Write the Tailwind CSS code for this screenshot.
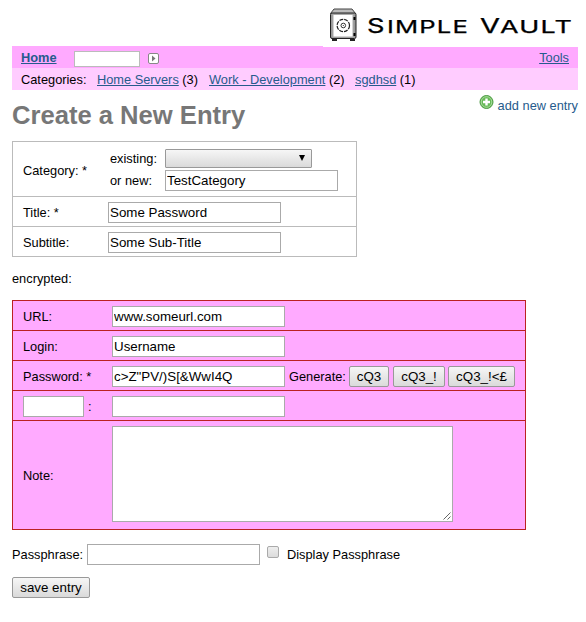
<!DOCTYPE html>
<html lang="en">
<head>
<meta charset="utf-8">
<title>Simple Vault</title>
<script src="https://cdn.jsdelivr.net/npm/@tailwindcss/browser@4"></script>
</head>
<body class="bg-white text-black font-['Liberation_Sans',Arial,sans-serif] text-[12.8px] leading-[15px] pl-3 pr-2 w-[586px] h-[622px] overflow-hidden">
<header class="flex justify-end h-[46px]">
  <svg class="relative block bg-white w-[255px] h-[47px] shrink-0" viewBox="323 0 255 47" role="img" aria-label="Simple Vault">
    <path d="M330.500 13.500 L334 9 H352 L355.500 13.500z" fill="#bbb" stroke="#444"/>
    <rect x="330.500" y="13" width="25.500" height="25.500" rx="1.500" fill="#999" stroke="#222"/>
    <rect x="333" y="14.500" width="20" height="22.500" fill="#fff" stroke="#aaa"/>
    <path d="M354.500 17v3M354.500 33v3" stroke="#000" stroke-width="2"/>
    <path d="M332 40h5M350 40h5" stroke="#222" stroke-width="2"/>
    <circle cx="343.300" cy="25.500" r="6.200" fill="none" stroke="#222" stroke-width="1.200" stroke-dasharray="3.900 1"/>
    <circle cx="343.300" cy="25.500" r="2.300" fill="none" stroke="#333" stroke-width="1"/>
    <circle cx="343.300" cy="25.500" r=".6" fill="#222"/>
    <g font-family="Inter, sans-serif" font-weight="400" fill="#000" stroke="#000" stroke-width=".25">
      <text x="367" y="33" font-size="20.500" textLength="17.500" lengthAdjust="spacingAndGlyphs">S</text>
      <text x="387" y="33" font-size="17.500" letter-spacing=".8" textLength="82" lengthAdjust="spacingAndGlyphs">IMPLE</text>
      <text x="480" y="33" font-size="20.500" textLength="20" lengthAdjust="spacingAndGlyphs">V</text>
      <text x="500" y="33" font-size="17.500" letter-spacing=".8" textLength="73" lengthAdjust="spacingAndGlyphs">AULT</text>
    </g>
  </svg>
</header>
<nav class="flex items-center h-[22px] bg-[#ffaaff] pl-[9px] pr-[9px]">
  <a class="font-bold underline w-[53px] text-[#265b8c]">Home</a>
  <span class="w-[66px] h-4 bg-white border border-[#bbb] mt-1"></span>
  <svg class="ml-2 mt-[3px] w-[11px] h-[11px]" viewBox="0 0 11 11"><rect x=".5" y=".5" width="10" height="10" rx="1.500" fill="#fff" stroke="#888"/><path d="M4 2.500v6l3.500-3z" fill="#777"/></svg>
  <a class="underline ml-auto text-[#265b8c]">Tools</a>
</nav>
<div class="flex items-center h-[22px] bg-[#ffccff] pl-[9px] pt-px whitespace-pre"><span class="w-[76px]">Categories:</span><span class="w-[112px]"><a class="underline text-[#265b8c]">Home Servers</a> (3)</span><span class="w-[146px]"><a class="underline text-[#265b8c]">Work - Development</a> (2)</span><span><a class="underline text-[#265b8c]">sgdhsd</a> (1)</span></div>
<div class="flex justify-between h-[51px]">
  <h1 class="text-[25.6px] leading-[30px] font-bold text-[#777] pt-[10px]">Create a New Entry</h1>
  <a class="flex items-start gap-1 pt-[5px] text-[#265b8c]">
    <svg class="w-[15px] h-[15px]" viewBox="0 0 15 15"><circle cx="7.500" cy="7" r="6.500" fill="#66b957" stroke="#4c9a43"/><circle cx="7.500" cy="7" r="5.300" fill="none" stroke="#a8dc9b"/><path d="M7.500 3.500v7M4 7h7" stroke="#fff" stroke-width="2.400"/></svg>
    <span class="mt-[3px]">add new entry</span>
  </a>
</div>

<section class="w-[345px] border border-[#bbb] divide-y divide-[#bbb]">
  <div class="flex items-center h-[55px] pl-[10px] pt-0.5">
    <label class="w-[87px]">Category: *</label>
    <div class="grid grid-cols-[55px_173px] gap-y-0.5 items-center">
      <span>existing:</span>
      <div class="w-[147px] h-[19px] flex items-center justify-end pr-1.5 border border-[#999] rounded-[1px] bg-linear-to-b from-[#f6f6f6] to-[#dadada]"><svg class="w-[6px] h-[6px] mb-0.5" viewBox="0 0 6 6"><path d="M0 0h6L3 6z"/></svg></div>
      <span>or new:</span>
      <input class="w-[173px] h-[21px] border border-[#aaa] bg-white px-px text-[13.333px]" value="TestCategory">
    </div>
  </div>
  <div class="flex items-center h-[30px] pl-[10px] pt-0.5"><label class="w-[85px]">Title: *</label><input class="w-[173px] h-[21px] border border-[#aaa] bg-white px-px text-[13.333px]" value="Some Password"></div>
  <div class="flex items-center h-[29px] pl-[10px] pt-0.5"><label class="w-[85px]">Subtitle:</label><input class="w-[173px] h-[21px] border border-[#aaa] bg-white px-px text-[13.333px]" value="Some Sub-Title"></div>
</section>

<p class="pt-[14px] h-[43px]">encrypted:</p>

<section class="w-[514px] border border-[#bb2222] bg-[#ffaaff] divide-y divide-[#bb2222]">
  <div class="flex items-center h-[30px] pl-[10px] pt-0.5"><label class="w-[89px]">URL:</label><input class="w-[173px] h-[21px] border border-[#aaa] bg-white px-px text-[13.333px]" value="www.someurl.com"></div>
  <div class="flex items-center h-[30px] pl-[10px] pt-0.5"><label class="w-[89px]">Login:</label><input class="w-[173px] h-[21px] border border-[#aaa] bg-white px-px text-[13.333px]" value="Username"></div>
  <div class="flex items-center h-[30px] pl-[10px] pt-0.5"><label class="w-[89px]">Password: *</label><input class="w-[173px] h-[21px] border border-[#aaa] bg-white px-px text-[13.333px]" value="c&gt;Z&quot;PV/)S[&amp;WwI4Q">
    <span class="w-[60px] ml-1">Generate:</span>
    <button class="w-[40px] h-[21px] border border-[#999] rounded-[2px] bg-linear-to-b from-[#f6f6f6] to-[#dadada] text-[13.333px] leading-[19px]">cQ3</button>
    <button class="w-[52px] h-[21px] ml-1 border border-[#999] rounded-[2px] bg-linear-to-b from-[#f6f6f6] to-[#dadada] text-[13.333px] leading-[19px]">cQ3_!</button>
    <button class="w-[67px] h-[21px] ml-[3px] border border-[#999] rounded-[2px] bg-linear-to-b from-[#f6f6f6] to-[#dadada] text-[13.333px] leading-[19px]">cQ3_!&lt;£</button>
  </div>
  <div class="flex items-center h-[30px] pl-[10px] pt-0.5"><input class="w-[61px] h-[21px] border border-[#aaa] bg-white"><span class="w-[28px] pl-1">:</span><input class="w-[173px] h-[21px] border border-[#aaa] bg-white"></div>
  <div class="flex items-start h-[108px] pl-[10px] pt-[5px]"><label class="w-[89px] pt-[42px]">Note:</label>
    <div class="w-[341px] h-[96px] border border-[#aaa] bg-white flex items-end justify-end p-px"><svg class="w-[8px] h-[8px]" viewBox="0 0 8 8"><path d="M.5 7.500l7-7M4.500 7.500l3-3" stroke="#666"/></svg></div>
  </div>
</section>

<div class="flex mt-[14px] h-[21px] items-center">
  <label class="w-[75px]">Passphrase:</label>
  <input class="w-[173px] h-[21px] border border-[#aaa] bg-white">
  <span class="ml-[7px] mb-[5px] w-3 h-3 rounded-[2px] border border-[#aaa] bg-linear-to-b from-[#eee] to-[#dcdcdc]"></span>
  <span class="ml-2">Display Passphrase</span>
</div>
<button class="block mt-3 w-[78px] h-[21px] border border-[#999] rounded-[2px] bg-linear-to-b from-[#f6f6f6] to-[#dadada] text-[13.333px] leading-[19px]">save entry</button>
</body>
</html>
